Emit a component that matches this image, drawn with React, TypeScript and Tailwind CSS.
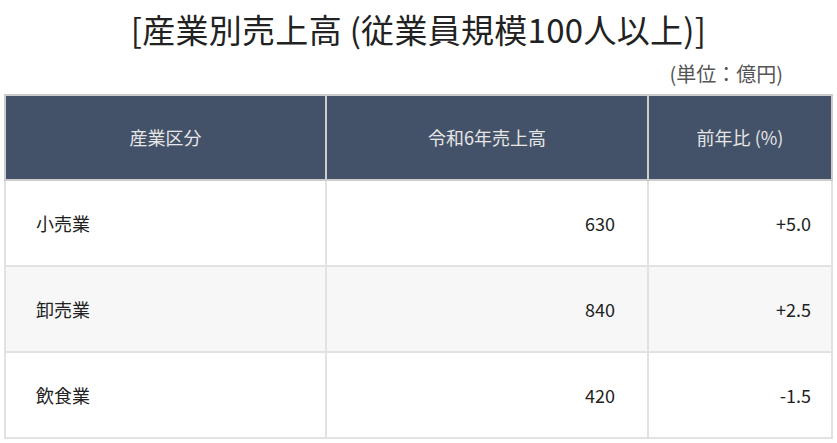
import React from "react";

const rows = [
  { name: "小売業", sales: "630", yoy: "+5.0", bg: "bg-white" },
  { name: "卸売業", sales: "840", yoy: "+2.5", bg: "bg-[#f7f7f7]" },
  { name: "飲食業", sales: "420", yoy: "-1.5", bg: "bg-white" },
];

export default function App() {
  return (
    <div
      className="w-[837px] h-[443px] bg-white overflow-hidden"
      style={{ fontFamily: '"Noto Sans CJK JP", "Noto Sans", sans-serif' }}
    >
      <h1 className="pt-[5px] h-[54px] text-center text-[33px] leading-[48px] tracking-[0.3px] text-[#222222]">
        [産業別売上高 (従業員規模100人以上)]
      </h1>
      <div className="h-[40px] pr-[54px] flex items-center justify-end text-[20px] text-[#555555]">
        (単位：億円)
      </div>
      <table className="ml-[4px] w-[827px] border-collapse text-[18px] table-fixed">
        <colgroup>
          <col className="w-[321px]" />
          <col className="w-[322px]" />
          <col className="w-[184px]" />
        </colgroup>
        <thead>
          <tr className="bg-[#445269] text-[#e6e6e6] h-[85px]">
            <th className="border-2 border-[#cccccc] font-normal text-center">産業区分</th>
            <th className="border-2 border-[#cccccc] font-normal text-center">令和6年売上高</th>
            <th className="border-2 border-[#cccccc] font-normal text-center">前年比 (%)</th>
          </tr>
        </thead>
        <tbody>
          {rows.map((r) => (
            <tr key={r.name} className={`${r.bg} h-[86px] text-[#222222]`}>
              <td className="border-2 border-[#e2e2e2] pl-[30px] text-left">{r.name}</td>
              <td className="border-2 border-[#e2e2e2] pr-[32px] text-right">{r.sales}</td>
              <td className="border-2 border-[#e2e2e2] pr-[20px] text-right">{r.yoy}</td>
            </tr>
          ))}
        </tbody>
      </table>
    </div>
  );
}
